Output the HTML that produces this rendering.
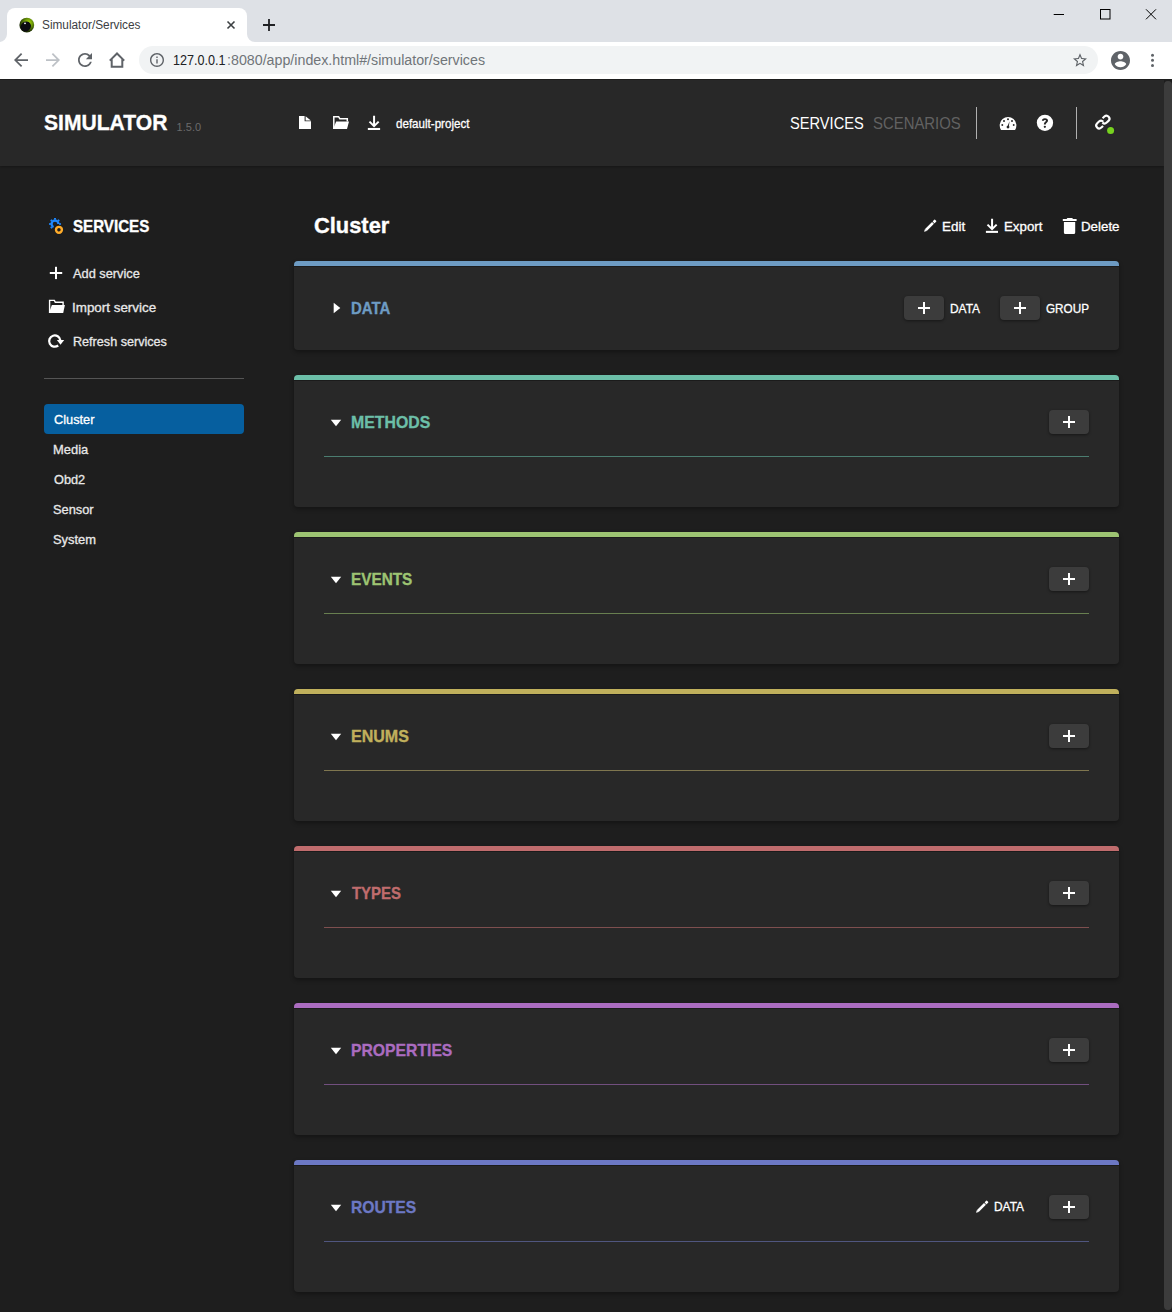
<!DOCTYPE html>
<html><head><meta charset="utf-8">
<style>
*{box-sizing:border-box;margin:0;padding:0}
html,body{width:1172px;height:1312px;overflow:hidden;background:#1e1e1e;font-family:"Liberation Sans",sans-serif}
.a{position:absolute}
.t{position:absolute;white-space:nowrap;line-height:1;transform-origin:0 0}
svg{position:absolute;display:block;overflow:visible}
#tabstrip{left:0;top:0;width:1172px;height:42px;background:#dee1e6}
#tab{left:7px;top:8px;width:240px;height:34px;background:#fff;border-radius:8px 8px 0 0}
#toolbar{left:0;top:42px;width:1172px;height:37px;background:#fff}
#omni{left:139px;top:46px;width:959px;height:28px;background:#f1f3f4;border-radius:14px}
#header{left:0;top:80px;width:1164px;height:86px;background:#282828;box-shadow:0 1px 2px rgba(0,0,0,.25)}
#thumb{left:1164px;top:80.5px;width:8px;height:1229.5px;background:#3c3c3c;border-radius:4px}
.card{position:absolute;left:294px;width:825px;background:#282828;border-radius:4px;box-shadow:0 2px 4px rgba(0,0,0,.35)}
.card .bar{position:absolute;left:0;top:0;width:100%;height:5.25px;border-radius:4px 4px 0 0;box-shadow:0 1px 0 rgba(0,0,0,.3)}
.card .sep{position:absolute;left:29.85px;width:765.25px;height:1.35px}
.btn{position:absolute;width:40px;height:24px;background:#3c3c3c;border-radius:4px;box-shadow:0 1px 3px rgba(0,0,0,.45)}
.btn:before{content:"";position:absolute;left:13.8px;top:11px;width:12.5px;height:2.2px;background:#fff}
.btn:after{content:"";position:absolute;left:18.9px;top:5.7px;width:2.2px;height:12.6px;background:#fff}

</style></head><body>
<div id="tabstrip" class="a"></div>
<div id="tab" class="a"></div>
<!-- tab feet -->
<svg style="left:-1px;top:34px" width="8" height="8"><path d="M0 8 A8 8 0 0 0 8 0 L8 8 Z" fill="#fff"/></svg>
<svg style="left:247px;top:34px" width="8" height="8"><path d="M0 0 A8 8 0 0 0 8 8 L0 8 Z" fill="#fff"/></svg>
<div id="toolbar" class="a"></div>
<div id="omni" class="a"></div>
<div id="header" class="a"></div>
<div id="thumb" class="a"></div>

<!-- favicon -->
<svg style="left:0;top:0" width="1" height="1">
 <defs><radialGradient id="fg" cx="0.62" cy="0.35" r="0.6"><stop offset="0" stop-color="#b4e40a"/><stop offset="0.45" stop-color="#6c9808"/><stop offset="1" stop-color="#1c2c04"/></radialGradient></defs>
 <circle cx="26.8" cy="25.1" r="7.4" fill="url(#fg)"/>
 <ellipse cx="25.8" cy="26.5" rx="5.4" ry="4.8" transform="rotate(-35 25.8 26.5)" fill="#0b0b10"/>
 <circle cx="25" cy="23.3" r="0.9" fill="#fff"/>
</svg>
<!-- tab close -->
<svg style="left:227px;top:21px" width="8" height="8" viewBox="0 0 8 8"><path d="M0.5 0.5L7.5 7.5M7.5 0.5L0.5 7.5" stroke="#3c4043" stroke-width="1.6"/></svg>
<!-- new tab -->
<svg style="left:263px;top:19px" width="12" height="12" viewBox="0 0 12 12"><path d="M6 0V12M0 6H12" stroke="#202124" stroke-width="1.8"/></svg>
<!-- window controls -->
<svg style="left:1053px;top:9px" width="106" height="11" viewBox="0 0 106 11">
 <path d="M0.7 5.5H11" stroke="#000" stroke-width="1"/>
 <rect x="47.5" y="0.5" width="9.5" height="9.5" fill="none" stroke="#000" stroke-width="1"/>
 <path d="M93 0.3L103 10.3M103 0.3L93 10.3" stroke="#000" stroke-width="1"/>
</svg>
<!-- nav buttons -->
<svg style="left:14px;top:53px" width="14" height="14" viewBox="4 4 16 16"><path fill="#5f6368" d="M20 11H7.83l5.59-5.59L12 4l-8 8 8 8 1.41-1.41L7.83 13H20v-2z"/></svg>
<svg style="left:46px;top:53px" width="14" height="14" viewBox="4 4 16 16"><path fill="#bdc1c6" d="M12 4l-1.41 1.41L16.17 11H4v2h12.17l-5.58 5.59L12 20l8-8z"/></svg>
<svg style="left:78px;top:53px" width="14" height="14" viewBox="4 4 16 16"><path fill="#5f6368" d="M17.65 6.35C16.2 4.9 14.21 4 12 4c-4.42 0-7.99 3.58-7.99 8s3.57 8 7.99 8c3.73 0 6.84-2.55 7.73-6h-2.08c-.82 2.33-3.04 4-5.65 4-3.31 0-6-2.69-6-6s2.69-6 6-6c1.66 0 3.14.69 4.22 1.78L13 11h7V4l-2.35 2.35z"/></svg>
<svg style="left:0;top:0" width="1" height="1"><path d="M109.8 60.6L117 53.5L124.2 60.6M111.7 59V66.8H122.3V59" fill="none" stroke="#5f6368" stroke-width="2"/></svg>
<!-- info -->
<svg style="left:150px;top:53px" width="14" height="14" viewBox="2 2 20 20"><path fill="#5f6368" d="M11 7h2v2h-2zm0 4h2v6h-2zm1-9C6.48 2 2 6.48 2 12s4.48 10 10 10 10-4.48 10-10S17.52 2 12 2zm0 18c-4.41 0-8-3.59-8-8s3.59-8 8-8 8 3.59 8 8-3.59 8-8 8z"/></svg>
<!-- star -->
<svg style="left:1073px;top:53px" width="14" height="14" viewBox="2 2 20 19"><path fill="#5f6368" d="M22 9.24l-7.19-.62L12 2 9.19 8.63 2 9.24l5.46 4.73L5.82 21 12 17.270 18.18 21l-1.63-7.03L22 9.24zM12 15.4l-3.76 2.27 1-4.28-3.32-2.88 4.38-.38L12 6.1l1.71 4.04 4.38.38-3.32 2.88 1 4.28L12 15.4z"/></svg>
<!-- account -->
<svg style="left:1110.5px;top:50.5px" width="19" height="19" viewBox="2 2 20 20"><path fill="#5f6368" d="M12 2C6.48 2 2 6.48 2 12s4.48 10 10 10 10-4.48 10-10S17.52 2 12 2zm0 3c1.66 0 3 1.34 3 3s-1.34 3-3 3-3-1.34-3-3 1.34-3 3-3zm0 14.2c-2.5 0-4.71-1.28-6-3.22.03-1.99 4-3.08 6-3.08 1.99 0 5.970 1.09 6 3.08-1.29 1.94-3.5 3.22-6 3.22z"/></svg>
<!-- menu dots -->
<svg style="left:1150px;top:53px" width="4" height="15" viewBox="0 0 4 15"><circle cx="2.5" cy="2.3" r="1.5" fill="#5f6368"/><circle cx="2.5" cy="7.35" r="1.5" fill="#5f6368"/><circle cx="2.5" cy="12.4" r="1.5" fill="#5f6368"/></svg>

<!-- header icons -->
<svg style="left:0;top:0" width="1" height="1">
 <path d="M299 116H304.6V121.2H311V129.1H299Z" fill="#fff"/>
 <path d="M305.6 116.2L310.9 120.5H305.6Z" fill="#fff"/>
 <path d="M333.8 129V116.7H338.6L339.8 118.7H347.3V121.6" fill="none" stroke="#fff" stroke-width="1.5"/>
 <path d="M336.2 121.6H349L347 129.1H333.1Z" fill="#fff"/>
 <path d="M374.07 115.85V125.8M369.5 121.6L374.07 126.15L378.65 121.6" fill="none" stroke="#fff" stroke-width="2"/>
 <rect x="367.85" y="127.95" width="12.25" height="2.05" fill="#fff"/>
</svg>
<div class="a" style="left:976px;top:107px;width:1px;height:32px;background:#b0b0b0"></div>
<div class="a" style="left:1076px;top:107px;width:1px;height:32px;background:#b0b0b0"></div>
<!-- dashboard -->
<svg style="left:0;top:0" width="1" height="1">
 <path d="M1001.05 129.9A8.35 8.35 0 1 1 1015.05 129.9Z" fill="#fff"/>
 <g fill="#282828">
 <circle cx="1008" cy="119.3" r="1"/><circle cx="1004" cy="120.95" r="1"/><circle cx="1012" cy="120.95" r="1"/>
 <circle cx="1002.3" cy="124.95" r="0.95"/><circle cx="1013.7" cy="124.95" r="0.95"/>
 <path d="M1007.2 126.9L1009.5 121.3L1008.8 127.1Z"/>
 <circle cx="1008" cy="127.1" r="1.45"/>
 </g>
</svg>
<!-- help -->
<svg style="left:0;top:0" width="1" height="1">
 <circle cx="1044.95" cy="122.85" r="8.15" fill="#fff"/>
 <path d="M1042.85 120.7C1042.85 119.6 1043.8 119.1 1044.95 119.1C1046.2 119.1 1047.05 119.8 1047.05 120.8C1047.05 122.1 1044.85 122.5 1044.85 123.9V124.55" fill="none" stroke="#282828" stroke-width="1.95"/>
 <circle cx="1044.85" cy="126.85" r="1.15" fill="#282828"/>
</svg>
<!-- link -->
<svg style="left:0;top:0" width="1" height="1"><g fill="none" stroke="#fff" stroke-width="2.15" transform="translate(1102.85 122.05) rotate(-43)">
<path d="M2.45 -3.0L4.9 -3.0A3.0 3.0 0 0 1 4.9 3.0L2.45 3.0A3.0 3.0 0 0 1 -0.5499999999999998 0"/><path d="M-2.45 3.0L-4.9 3.0A3.0 3.0 0 0 1 -4.9 -3.0L-2.45 -3.0A3.0 3.0 0 0 1 0.5499999999999998 0"/>
</g></svg>
<svg style="left:0;top:0" width="1" height="1"><circle cx="1110.6" cy="130.5" r="4.6" fill="#282828"/><circle cx="1110.6" cy="130.5" r="3.5" fill="#77d21f"/></svg>

<!-- sidebar icons -->
<svg style="left:55px;top:224.1px" width="1" height="1">
 <g fill="#1e88ff">
  <circle cx="0" cy="0" r="3.4" fill="none" stroke="#1e88ff" stroke-width="2.2" stroke-dasharray="14.6 100" stroke-dashoffset="-6.7"/>
  <path d="M4.2 -1.25L5.9 -0.85V0.85L4.2 1.25Z" transform="rotate(0)"/><path d="M4.2 -1.25L5.9 -0.85V0.85L4.2 1.25Z" transform="rotate(315)"/><path d="M4.2 -1.25L5.9 -0.85V0.85L4.2 1.25Z" transform="rotate(270)"/><path d="M4.2 -1.25L5.9 -0.85V0.85L4.2 1.25Z" transform="rotate(225)"/><path d="M4.2 -1.25L5.9 -0.85V0.85L4.2 1.25Z" transform="rotate(180)"/><path d="M4.2 -1.25L5.9 -0.85V0.85L4.2 1.25Z" transform="rotate(135)"/>
 </g>
 <circle cx="3.95" cy="5.8" r="4.9" fill="#1e1e1e"/>
 <circle cx="3.95" cy="5.8" r="2.95" fill="none" stroke="#ffac2a" stroke-width="2.4"/>
</svg>
<svg style="left:0;top:0" width="1" height="1">
 <rect x="49.8" y="272" width="12.4" height="2" fill="#fff"/>
 <rect x="55" y="266.8" width="2" height="12.3" fill="#fff"/>
 <path d="M49.6 313V300.4H54.3L55.3 302.2H63.1V304.9" fill="none" stroke="#fff" stroke-width="1.4"/>
 <path d="M51.9 304.9H64.9L63.2 313.1H48.9Z" fill="#fff"/>
 <path d="M60.3 340.3A5.6 5.6 0 1 0 58.2 345.47" fill="none" stroke="#fff" stroke-width="2.3"/>
 <path d="M56.9 340.1L64.2 339.9L60.5 344.7Z" fill="#fff"/>
</svg>
<div class="a" style="left:44px;top:378px;width:200px;height:1px;background:#555"></div>
<div class="a" style="left:44px;top:404px;width:200px;height:30px;background:#065f9f;border-radius:4px"></div>

<!-- main icons -->
<svg style="left:0;top:0" width="1" height="1"><g fill="#fff" transform="translate(929.9 226) rotate(-45)"><path d="M-8.2 0L-5.8 -1.35V1.35Z"/><rect x="-5.8" y="-1.35" width="10.2" height="2.7"/><rect x="5.1" y="-1.35" width="3" height="2.7" rx="0.6"/></g></svg>
<svg style="left:0;top:0" width="1" height="1">
 <path d="M992.07 218.8V228.8M987.5 224.6L992.07 229.15L996.65 224.6" fill="none" stroke="#fff" stroke-width="2"/>
 <rect x="985.9" y="230.85" width="12.1" height="2.05" fill="#fff"/>
</svg>
<svg style="left:0;top:0" width="1" height="1"><g fill="#fff"><path d="M1062.8 219H1066.6L1067.4 217.9H1072.2L1073 219H1076.6V220.95H1062.8Z"/><path d="M1063.9 221.9H1075.2V232.6A1.5 1.5 0 0 1 1073.7 234.1H1065.4A1.5 1.5 0 0 1 1063.9 232.6Z"/></g></svg>

<!-- cards -->
<div class="card" style="top:260.75px;height:89px"><div class="bar" style="background:#6d9bc3"></div></div>
<div class="card" style="top:374.6px;height:132.3px"><div class="bar" style="background:#6cbfa8"></div><div class="sep" style="top:81.1px;background:#4b7d70"></div></div>
<div class="card" style="top:531.7px;height:132.3px"><div class="bar" style="background:#9dc472"></div><div class="sep" style="top:81.1px;background:#687f50"></div></div>
<div class="card" style="top:688.75px;height:132.3px"><div class="bar" style="background:#c0b05c"></div><div class="sep" style="top:81.1px;background:#7f764f"></div></div>
<div class="card" style="top:845.8px;height:132.3px"><div class="bar" style="background:#c06c6d"></div><div class="sep" style="top:81.1px;background:#7e4f4f"></div></div>
<div class="card" style="top:1002.85px;height:132.3px"><div class="bar" style="background:#ab6cc0"></div><div class="sep" style="top:81.1px;background:#724f7f"></div></div>
<div class="card" style="top:1159.9px;height:132.3px"><div class="bar" style="background:#6c78c4"></div><div class="sep" style="top:81.1px;background:#50567f"></div></div>

<!-- triangles -->
<svg style="left:0;top:0" width="1" height="1">
 <path d="M333.7 302.8L340.3 308L333.7 313.2Z" fill="#fff"/>
 <path d="M330.8 419.8H341.2L336 426.2Z" fill="#fff"/>
 <path d="M330.8 576.8H341.2L336 583.2Z" fill="#fff"/>
 <path d="M330.8 733.8H341.2L336 740.2Z" fill="#fff"/>
 <path d="M330.8 890.8H341.2L336 897.2Z" fill="#fff"/>
 <path d="M330.8 1047.8H341.2L336 1054.2Z" fill="#fff"/>
 <path d="M330.8 1204.8H341.2L336 1211.2Z" fill="#fff"/>
</svg>

<div class="btn" style="left:904px;top:296px"></div>
<div class="btn" style="left:1000px;top:296px"></div>
<div class="btn" style="left:1049px;top:410px"></div>
<div class="btn" style="left:1049px;top:567px"></div>
<div class="btn" style="left:1049px;top:724px"></div>
<div class="btn" style="left:1049px;top:881px"></div>
<div class="btn" style="left:1049px;top:1038px"></div>
<div class="btn" style="left:1049px;top:1195px"></div>
<svg style="left:0;top:0" width="1" height="1"><g fill="#fff" transform="translate(981.85 1207) rotate(-45)"><path d="M-8.2 0L-5.8 -1.35V1.35Z"/><rect x="-5.8" y="-1.35" width="10.2" height="2.7"/><rect x="5.1" y="-1.35" width="3" height="2.7" rx="0.6"/></g></svg>

<div class="t" style="left:42.32px;top:19.20px;font-size:12px;font-weight:400;color:#3c4043;transform:scaleX(0.9848);">Simulator/Services</div>
<div class="t" style="left:173.10px;top:53.10px;font-size:14px;font-weight:400;color:#202124;transform:scaleX(0.9000);">127.0.0.1</div>
<div class="t" style="left:226.68px;top:53.10px;font-size:14px;font-weight:400;color:#707579;transform:scaleX(1.0171);">:8080/app/index.html#/simulator/services</div>
<div class="t" style="left:43.58px;top:111.10px;font-size:22.9px;font-weight:700;color:#ffffff;transform:scaleX(0.9211);-webkit-text-stroke-width:0.35px;">SIMULATOR</div>
<div class="t" style="left:176.60px;top:122.20px;font-size:11px;font-weight:400;color:#6b6b6b;">1.5.0</div>
<div class="t" style="left:396.00px;top:116.50px;font-size:13px;font-weight:400;color:#ffffff;transform:scaleX(0.8916);-webkit-text-stroke-width:0.3px;">default-project</div>
<div class="t" style="left:790.14px;top:115.00px;font-size:17px;font-weight:400;color:#ffffff;transform:scaleX(0.8607);">SERVICES</div>
<div class="t" style="left:873.32px;top:115.00px;font-size:17px;font-weight:400;color:#626262;transform:scaleX(0.8768);">SCENARIOS</div>
<div class="t" style="left:73.30px;top:218.40px;font-size:17px;font-weight:700;color:#ffffff;transform:scaleX(0.8906);-webkit-text-stroke-width:0.35px;">SERVICES</div>
<div class="t" style="left:72.90px;top:267.00px;font-size:13px;font-weight:400;color:#e8e8e8;transform:scaleX(0.9838);-webkit-text-stroke-width:0.3px;">Add service</div>
<div class="t" style="left:72.47px;top:301.00px;font-size:13px;font-weight:400;color:#e8e8e8;transform:scaleX(1.0309);-webkit-text-stroke-width:0.3px;">Import service</div>
<div class="t" style="left:72.53px;top:335.00px;font-size:13px;font-weight:400;color:#e8e8e8;transform:scaleX(0.9698);-webkit-text-stroke-width:0.3px;">Refresh services</div>
<div class="t" style="left:54.30px;top:413.20px;font-size:13px;font-weight:400;color:#ffffff;transform:scaleX(0.9829);-webkit-text-stroke-width:0.3px;">Cluster</div>
<div class="t" style="left:53.31px;top:443.10px;font-size:13px;font-weight:400;color:#e8e8e8;transform:scaleX(0.9943);-webkit-text-stroke-width:0.3px;">Media</div>
<div class="t" style="left:54.30px;top:472.90px;font-size:13px;font-weight:400;color:#e8e8e8;transform:scaleX(0.9813);-webkit-text-stroke-width:0.3px;">Obd2</div>
<div class="t" style="left:53.31px;top:503.00px;font-size:13px;font-weight:400;color:#e8e8e8;transform:scaleX(0.9850);-webkit-text-stroke-width:0.3px;">Sensor</div>
<div class="t" style="left:53.31px;top:532.90px;font-size:13px;font-weight:400;color:#e8e8e8;transform:scaleX(0.9929);-webkit-text-stroke-width:0.3px;">System</div>
<div class="t" style="left:313.81px;top:215.00px;font-size:22px;font-weight:700;color:#ffffff;transform:scaleX(0.9933);-webkit-text-stroke-width:0.35px;">Cluster</div>
<div class="t" style="left:941.77px;top:219.60px;font-size:13px;font-weight:400;color:#ffffff;transform:scaleX(1.0318);-webkit-text-stroke-width:0.3px;">Edit</div>
<div class="t" style="left:1003.58px;top:219.60px;font-size:13px;font-weight:400;color:#ffffff;transform:scaleX(1.0216);-webkit-text-stroke-width:0.3px;">Export</div>
<div class="t" style="left:1080.77px;top:219.60px;font-size:13px;font-weight:400;color:#ffffff;transform:scaleX(1.0250);-webkit-text-stroke-width:0.3px;">Delete</div>
<div class="t" style="left:350.82px;top:299.80px;font-size:17px;font-weight:700;color:#6d9bc3;transform:scaleX(0.8795);-webkit-text-stroke-width:0.35px;">DATA</div>
<div class="t" style="left:350.77px;top:413.70px;font-size:17px;font-weight:700;color:#6cbfa8;transform:scaleX(0.9321);-webkit-text-stroke-width:0.35px;">METHODS</div>
<div class="t" style="left:350.80px;top:571.00px;font-size:17px;font-weight:700;color:#9dc472;transform:scaleX(0.9015);-webkit-text-stroke-width:0.35px;">EVENTS</div>
<div class="t" style="left:350.76px;top:728.10px;font-size:17px;font-weight:700;color:#c0b05c;transform:scaleX(0.9433);-webkit-text-stroke-width:0.35px;">ENUMS</div>
<div class="t" style="left:351.60px;top:885.20px;font-size:17px;font-weight:700;color:#c06c6d;transform:scaleX(0.8786);-webkit-text-stroke-width:0.35px;">TYPES</div>
<div class="t" style="left:350.68px;top:1042.10px;font-size:17px;font-weight:700;color:#ab6cc0;transform:scaleX(0.9250);-webkit-text-stroke-width:0.35px;">PROPERTIES</div>
<div class="t" style="left:350.68px;top:1199.10px;font-size:17px;font-weight:700;color:#6c78c4;transform:scaleX(0.9200);-webkit-text-stroke-width:0.35px;">ROUTES</div>
<div class="t" style="left:950.08px;top:301.90px;font-size:13px;font-weight:400;color:#ffffff;transform:scaleX(0.9187);-webkit-text-stroke-width:0.3px;">DATA</div>
<div class="t" style="left:1046.40px;top:301.90px;font-size:13px;font-weight:400;color:#ffffff;transform:scaleX(0.9021);-webkit-text-stroke-width:0.3px;">GROUP</div>
<div class="t" style="left:993.98px;top:1200.40px;font-size:13px;font-weight:400;color:#ffffff;transform:scaleX(0.9156);-webkit-text-stroke-width:0.3px;">DATA</div>
</body></html>
